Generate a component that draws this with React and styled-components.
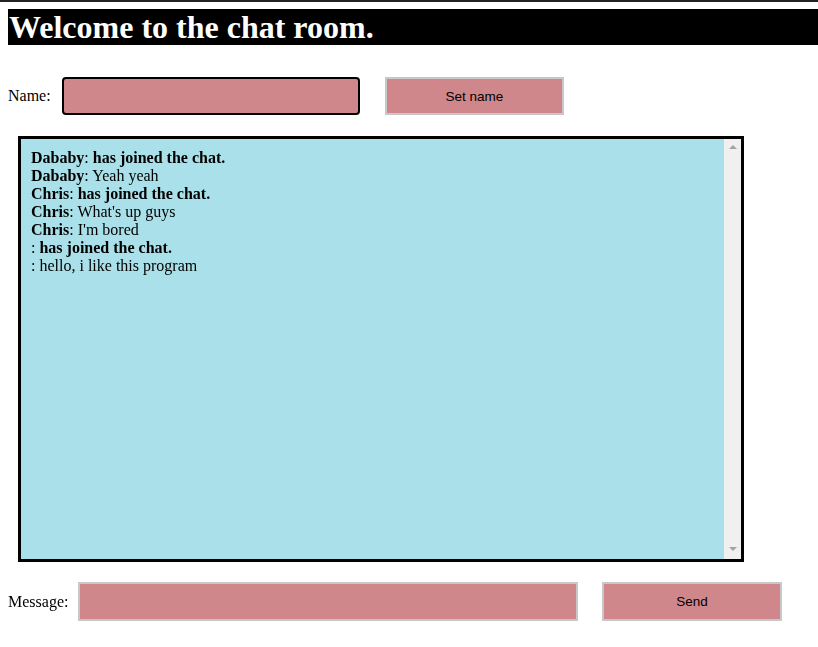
import React from "react";
import styled, { createGlobalStyle } from "styled-components";

const GlobalStyle = createGlobalStyle`
    html, body {
        margin: 0;
        padding: 0;
        background: #ffffff;
    }
    body {
        font-family: "Liberation Serif", "Times New Roman", serif;
        font-size: 16px;
        color: #000;
    }
`;

const TopRule = styled.div`
    height: 2px;
    background: #222222;
`;

const Page = styled.div`
    padding: 7px 0 0 8px;
`;

const Title = styled.h1`
    margin: 0;
    height: 36px;
    line-height: 37px;
    padding-left: 1px;
    background: #000;
    color: #fff;
    font-size: 32px;
    font-weight: bold;
`;

const FormRow = styled.div`
    display: flex;
    align-items: center;
    margin-top: ${props => props.top}px;
`;

const Label = styled.label`
    width: ${props => props.width}px;
    flex-shrink: 0;
`;

const TextInput = styled.input`
    box-sizing: border-box;
    width: ${props => props.width}px;
    height: ${props => props.height}px;
    padding: 0 10px;
    background: #cf878b;
    border: 2px solid ${props => props.focused ? "#000" : "#c8c8c8"};
    border-radius: ${props => props.focused ? "4px" : "0"};
    outline: none;
    font-family: "Liberation Sans", Arial, sans-serif;
    font-size: 13px;
    caret-color: #000;
`;

const Button = styled.button`
    box-sizing: border-box;
    width: ${props => props.width}px;
    height: ${props => props.height}px;
    margin-left: ${props => props.gap}px;
    background: #cf878b;
    border: 2px solid #c8c8c8;
    font-family: "Liberation Sans", Arial, sans-serif;
    font-size: 13.5px;
    color: #000;
    cursor: pointer;
`;

const ChatBox = styled.div`
    box-sizing: border-box;
    display: flex;
    width: 726px;
    height: 426px;
    margin: 21px 0 0 10px;
    background: #a9e0e9;
    border: 3px solid #000;
`;

const Messages = styled.div`
    flex: 1;
    padding: 10px;
    line-height: 18px;
    overflow: hidden;
`;

const ScrollTrack = styled.div`
    width: 17px;
    flex-shrink: 0;
    background: #f0f0f0;
    display: flex;
    flex-direction: column;
    justify-content: space-between;
    align-items: center;
    padding: 6px 0 8px;
`;

const ScrollArrow = styled.div`
    width: 0;
    height: 0;
    border-left: 4px solid transparent;
    border-right: 4px solid transparent;
    ${props => props.down
        ? "border-top: 4px solid #a3a3a3;"
        : "border-bottom: 4px solid #a3a3a3;"}
`;

const Line = styled.div``;

const Name = styled.b``;

const Body = styled.span`
    font-weight: ${props => props.joined ? "bold" : "normal"};
`;

const messages = [
    { name: "Dababy", text: "has joined the chat.", joined: true },
    { name: "Dababy", text: "Yeah yeah" },
    { name: "Chris", text: "has joined the chat.", joined: true },
    { name: "Chris", text: "What's up guys" },
    { name: "Chris", text: "I'm bored" },
    { name: "", text: "has joined the chat.", joined: true },
    { name: "", text: "hello, i like this program" }
];

export default function App() {
    return (
        <>
            <GlobalStyle />
            <TopRule />
            <Page>
                <Title>Welcome to the chat room.</Title>

                <FormRow top={32}>
                    <Label width={54}>Name:</Label>
                    <TextInput width={298} height={38} focused autoFocus />
                    <Button width={179} height={38} gap={25}>Set name</Button>
                </FormRow>

                <ChatBox>
                    <Messages>
                        {messages.map((m, i) => (
                            <Line key={i}>
                                <Name>{m.name}</Name>: <Body joined={m.joined}>{m.text}</Body>
                            </Line>
                        ))}
                    </Messages>
                    <ScrollTrack>
                        <ScrollArrow />
                        <ScrollArrow down />
                    </ScrollTrack>
                </ChatBox>

                <FormRow top={20}>
                    <Label width={70}>Message:</Label>
                    <TextInput width={500} height={39} />
                    <Button width={180} height={39} gap={24}>Send</Button>
                </FormRow>
            </Page>
        </>
    );
}
